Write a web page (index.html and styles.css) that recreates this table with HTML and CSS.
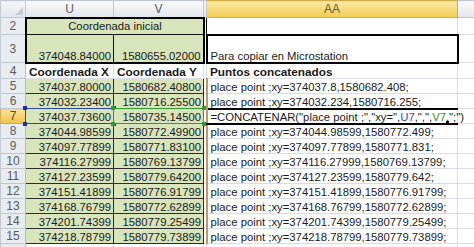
FILE: index.html
```html
<!DOCTYPE html>
<html>
<head>
<meta charset="utf-8">
<link rel="stylesheet" href="styles.css">
</head>
<body>
<table class="sheet">
  <colgroup>
    <col class="w-rh"><col class="w-u"><col class="w-v"><col class="w-hid"><col class="w-aa"><col class="w-ab">
  </colgroup>
  <tr class="r-hdr">
    <th class="corner"><span class="tri"></span></th>
    <th class="ch">U</th>
    <th class="ch">V</th>
    <th class="ch hid-h"></th>
    <th class="ch ch-active">AA</th>
    <th class="ch"></th>
  </tr>
  <tr class="r2">
    <th class="rh">2</th>
    <td colspan="2" class="g title">Coordenada inicial</td>
    <td class="hid hid-blk"></td>
    <td class="aa"></td>
    <td></td>
  </tr>
  <tr class="r3">
    <th class="rh">3</th>
    <td class="g num u3">374048.84000</td>
    <td class="g num v3">1580655.02000</td>
    <td class="hid hid-blk"></td>
    <td class="aa box">Para copiar en Microstation</td>
    <td></td>
  </tr>
  <tr class="r4">
    <th class="rh">4</th>
    <td class="bold">Coordenada X</td>
    <td class="bold">Coordenada Y</td>
    <td class="hid"></td>
    <td class="bold aa">Puntos concatenados</td>
    <td></td>
  </tr>
  <tr class="r">
    <th class="rh">5</th>
    <td class="g num">374037.80000</td><td class="g num vr">1580682.40800</td><td class="hid hid-br"></td>
    <td class="aa aa-br">place point ;xy=374037.8,1580682.408;</td><td></td>
  </tr>
  <tr class="r">
    <th class="rh">6</th>
    <td class="g num">374032.23400</td><td class="g num vr">1580716.25500</td><td class="hid hid-br"></td>
    <td class="aa aa-br">place point ;xy=374032.234,1580716.255;</td><td></td>
  </tr>
  <tr class="r">
    <th class="rh rh-active">7</th>
    <td class="g num sel-cell">374037.73600<span class="sel sel-blue"><i class="k tl"></i><i class="k tr"></i><i class="k bl"></i><i class="k br"></i></span></td>
    <td class="g num vr sel-cell">1580735.14500<span class="sel sel-green"><i class="k tl"></i><i class="k tr"></i><i class="k bl"></i><i class="k br"></i></span></td>
    <td class="hid hid-br"></td>
    <td class="aa aa-br active">=CONCATENAR("place point ;","xy=",<span class="ref-u">U7</span>,",",<span class="ref-v">V7</span>,";")<span class="handle"></span></td><td></td>
  </tr>
  <tr class="r">
    <th class="rh">8</th>
    <td class="g num">374044.98599</td><td class="g num vr">1580772.49900</td><td class="hid hid-br"></td>
    <td class="aa aa-br">place point ;xy=374044.98599,1580772.499;</td><td></td>
  </tr>
  <tr class="r">
    <th class="rh">9</th>
    <td class="g num">374097.77899</td><td class="g num vr">1580771.83100</td><td class="hid hid-br"></td>
    <td class="aa aa-br">place point ;xy=374097.77899,1580771.831;</td><td></td>
  </tr>
  <tr class="r">
    <th class="rh">10</th>
    <td class="g num">374116.27999</td><td class="g num vr">1580769.13799</td><td class="hid hid-br"></td>
    <td class="aa aa-br">place point ;xy=374116.27999,1580769.13799;</td><td></td>
  </tr>
  <tr class="r">
    <th class="rh">11</th>
    <td class="g num">374127.23599</td><td class="g num vr">1580779.64200</td><td class="hid hid-br"></td>
    <td class="aa aa-br">place point ;xy=374127.23599,1580779.642;</td><td></td>
  </tr>
  <tr class="r">
    <th class="rh">12</th>
    <td class="g num">374151.41899</td><td class="g num vr">1580776.91799</td><td class="hid hid-br"></td>
    <td class="aa aa-br">place point ;xy=374151.41899,1580776.91799;</td><td></td>
  </tr>
  <tr class="r">
    <th class="rh">13</th>
    <td class="g num">374168.76799</td><td class="g num vr">1580772.62899</td><td class="hid hid-br"></td>
    <td class="aa aa-br">place point ;xy=374168.76799,1580772.62899;</td><td></td>
  </tr>
  <tr class="r">
    <th class="rh">14</th>
    <td class="g num">374201.74399</td><td class="g num vr">1580779.25499</td><td class="hid hid-br"></td>
    <td class="aa aa-br">place point ;xy=374201.74399,1580779.25499;</td><td></td>
  </tr>
  <tr class="r">
    <th class="rh">15</th>
    <td class="g num">374218.78799</td><td class="g num vr">1580779.73899</td><td class="hid hid-br"></td>
    <td class="aa aa-br">place point ;xy=374218.78799,1580779.73899;</td><td></td>
  </tr>
  <tr class="r">
    <th class="rh"></th>
    <td></td><td></td><td class="hid"></td><td class="aa"></td><td></td>
  </tr>
</table>
</body>
</html>
```

FILE: styles.css
```css
html, body {
  margin: 0;
  padding: 0;
  background: #fff;
  overflow: hidden;
}

.sheet {
  border-collapse: collapse;
  table-layout: fixed;
  width: 474px;
  font-family: "Liberation Sans", Arial, sans-serif;
  font-size: 11.3px;
  color: #1b1b1b;
}

.w-rh { width: 25px; }
.w-u { width: 88px; }
.w-v { width: 90px; }
.w-hid { width: 3px; }
.w-aa { width: 251px; }
.w-ab { width: 17px; }

.sheet td, .sheet th {
  padding: 0 2px 0 3px;
  border: 1px solid #d9dde3;
  white-space: nowrap;
  overflow: visible;
  vertical-align: bottom;
  line-height: 12px;
  font-weight: normal;
  text-align: left;
}

.r-hdr { height: 17px; }
.r2 { height: 17px; }
.r3 { height: 28px; }
.r4 { height: 16px; }
.r { height: 15px; }

/* headers */
.sheet th.ch {
  background: linear-gradient(#f9fafb, #e2e5ea);
  color: #5b5b5b;
  text-align: center;
  vertical-align: middle;
  border: 1px solid #c3c8d0;
  font-size: 12px;
  padding: 0;
}
.sheet th.ch-active {
  background: linear-gradient(#fbe9a4, #f4cb52);
  border-color: #d1ad4c;
  color: #6a5a2a;
}
.sheet th.corner {
  background: linear-gradient(#f5f6f8, #e3e6ea);
  border: 1px solid #c3c8d0;
  padding: 0;
  position: relative;
}
.tri {
  position: absolute;
  right: 2px;
  bottom: 2px;
  width: 0;
  height: 0;
  border-left: 8px solid transparent;
  border-bottom: 8px solid #c8ccd2;
}
.sheet th.rh {
  background: #e8ebf0;
  color: #5b5b5b;
  text-align: center;
  vertical-align: middle;
  border: 1px solid #c3c8d0;
  border-right-color: #b4bcc7;
  font-size: 12px;
  padding: 0;
}
.sheet th.rh-active {
  background: linear-gradient(#fbe29a, #f2c24c);
  border-color: #d1ad4c;
  color: #5a4a20;
}

/* cells */
.sheet td.g {
  background: #d7e4bc;
  border: 1px solid #2c2c2c;
}
.sheet td.num { text-align: right; padding-right: 2px; }
.sheet td.title {
  text-align: center;
  border-top: 2px solid #000;
  border-left: 2px solid #000;
  border-right: 2px solid #000;
  border-bottom: 1px solid #111;
  vertical-align: middle;
}
.sheet td.u3 {
  border-left: 2px solid #000;
  border-bottom: 2px solid #000;
  border-right: 1px solid #111;
}
.sheet td.v3 {
  border-right: 2px solid #000;
  border-bottom: 2px solid #000;
}
.sheet td.bold {
  font-weight: bold;
  font-size: 11.8px;
}
.sheet td.hid { padding: 0; }
.sheet td.hid-blk { border-right: 1px solid #000; }
.sheet td.hid-br { border-left: 1px solid #2c2c2c; }
.sheet td.aa-br { border-left: 2px solid #c9946a; }
.sheet td.box {
  border: 2px solid #000;
}
.sheet td.active {
  border-top: 2px solid #000;
  border-bottom: 2px solid #000;
  position: relative;
}
.ref-u { color: #2a4bb8; }
.ref-v { color: #2f8f2f; }
.handle {
  position: absolute;
  left: 238px;
  bottom: -2px;
  width: 3px;
  height: 4px;
  background: #000;
}

/* reference selections */
.sheet td.sel-cell { position: relative; }
.sel {
  position: absolute;
  left: -1px;
  top: -1px;
  right: -1px;
  bottom: -1px;
  pointer-events: none;
}
.sel-blue { border: 1px solid #2a44a8; }
.sel-green { border: 1px solid #2f9a2f; }
.k {
  position: absolute;
  width: 4px;
  height: 4px;
}
.sel-blue .k { background: #1f2f99; }
.sel-green .k { background: #2f9a2f; }
.k.tl { left: -3px; top: -3px; }
.k.tr { right: -3px; top: -3px; }
.k.bl { left: -3px; bottom: -3px; }
.k.br { right: -3px; bottom: -3px; }
```
